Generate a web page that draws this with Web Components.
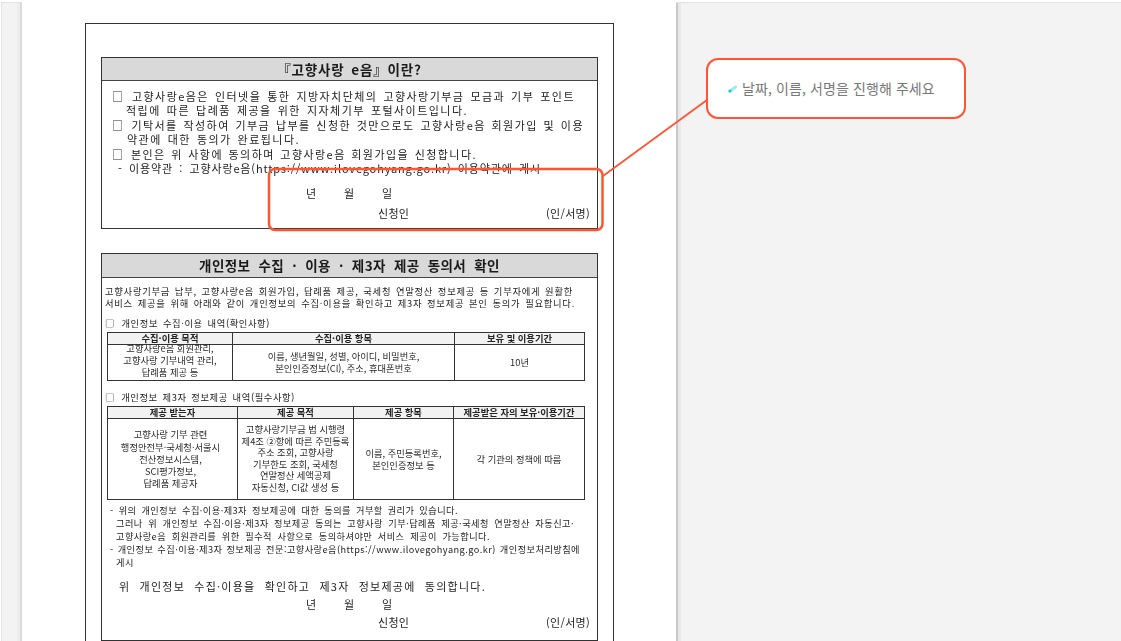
<!DOCTYPE html>
<html lang="ko">
<head>
<meta charset="utf-8">
<title>개인정보 동의서</title>
<style>
  html, body { margin: 0; height: 100%; background: #fff; overflow: hidden; }
  body { font-family: "Noto Sans CJK KR", "Noto Sans", sans-serif; }
</style>
</head>
<body>
<guide-shell>
  <consent-sheet>
    <form-box heading="『고향사랑 e음』이란?" style="--box-h:172px;--head-h:22px;--head-size:13.5px;--head-gap:2px;--head-track:.85px">
      <line-stack style="--lh:14.4px;--size:11px;--pad:8px 0 0 10px;--track:1.45px">
        <form-line style="--w:463px">□ 고향사랑e음은 인터넷을 통한 지방자치단체의 고향사랑기부금 모금과 기부 포인트</form-line>
        <form-line style="--w:342px;--in:14px">적립에 따른 답례품 제공을 위한 지자체기부 포털사이트입니다.</form-line>
        <form-line style="--w:472px">□ 기탁서를 작성하여 기부금 납부를 신청한 것만으로도 고향사랑e음 회원가입 및 이용</form-line>
        <form-line style="--w:173px;--in:15px">약관에 대한 동의가 완료됩니다.</form-line>
        <form-line style="--w:365px">□ 본인은 위 사항에 동의하며 고향사랑e음 회원가입을 신청합니다.</form-line>
        <form-line style="--w:423px;--in:6px;letter-spacing:.85px">- 이용약관 : 고향사랑e음(https://www.ilovegohyang.go.kr) 이용약관에 게시</form-line>
      </line-stack>
      <sign-block style="--top:8px;--date-h:20px;--name-h:20px"></sign-block>
    </form-box>

    <form-box heading="개인정보 수집 · 이용 · 제3자 제공 동의서 확인" style="--box-h:388px;--box-gap:24px;--head-h:23px;--head-size:13.5px;--head-gap:4px;--head-track:.38px">
      <line-stack style="--lh:12.3px;--size:9.3px;--pad:7px 0 0 3px;--track:.75px">
        <form-line style="--w:468px">고향사랑기부금 납부, 고향사랑e음 회원가입, 답례품 제공, 국세청 연말정산 정보제공 등 기부자에게 원활한</form-line>
        <form-line style="--w:470px">서비스 제공을 위해 아래와 같이 개인정보의 수집·이용을 확인하고 제3자 정보제공 본인 동의가 필요합니다.</form-line>
      </line-stack>
      <line-stack style="--lh:12px;--size:9.3px;--pad:7.4px 0 3px 3px;--track:.6px">
        <form-line style="--w:165px">□ 개인정보 수집·이용 내역(확인사항)</form-line>
      </line-stack>
      <data-grid style="--cols:124px 222px 130px;--head-h:12px;--row-h:35px">
        <grid-cell head>수집·이용 목적</grid-cell>
        <grid-cell head>수집·이용 항목</grid-cell>
        <grid-cell head>보유 및 이용기간</grid-cell>
        <grid-cell style="padding-bottom:3px;line-height:11.8px">고향사랑e음 회원관리,<br>고향사랑 기부내역 관리,<br>답례품 제공 등</grid-cell>
        <grid-cell>이름, 생년월일, 성별, 아이디, 비밀번호,<br>본인인증정보(CI), 주소, 휴대폰번호</grid-cell>
        <grid-cell>10년</grid-cell>
      </data-grid>
      <line-stack style="--lh:12px;--size:9.3px;--pad:10px 0 3px 3px;--track:.6px">
        <form-line style="--w:190px">□ 개인정보 제3자 정보제공 내역(필수사항)</form-line>
      </line-stack>
      <data-grid style="--cols:129px 116px 100px 131px;--head-h:12px;--row-h:80px">
        <grid-cell head>제공 받는자</grid-cell>
        <grid-cell head>제공 목적</grid-cell>
        <grid-cell head>제공 항목</grid-cell>
        <grid-cell head>제공받은 자의 보유·이용기간</grid-cell>
        <grid-cell style="padding-right:4px">고향사랑 기부 관련<br>행정안전부·국세청·서울시<br>전산정보시스템,<br>SCI평가정보,<br>답례품 제공자</grid-cell>
        <grid-cell style="line-height:11.5px">고향사랑기부금 법 시행령<br>제4조 ②항에 따른 주민등록<br>주소 조회, 고향사랑<br>기부한도 조회, 국세청<br>연말정산 세액공제<br>자동신청, CI값 생성 등</grid-cell>
        <grid-cell>이름, 주민등록번호,<br>본인인증정보 등</grid-cell>
        <grid-cell>각 기관의 정책에 따름</grid-cell>
      </data-grid>
      <line-stack style="--lh:13px;--size:9.2px;--pad:4px 0 0 8px;--track:.45px">
        <form-line style="--w:348px">- 위의 개인정보 수집·이용·제3자 정보제공에 대한 동의를 거부할 권리가 있습니다.</form-line>
        <form-line style="--w:458px;--in:6px">그러나 위 개인정보 수집·이용·제3자 정보제공 동의는 고향사랑 기부·답례품 제공·국세청 연말정산 자동신고·</form-line>
        <form-line style="--w:374px;--in:6px">고향사랑e음 회원관리를 위한 필수적 사항으로 동의하셔야만 서비스 제공이 가능합니다.</form-line>
        <form-line style="--w:470px">- 개인정보 수집·이용·제3자 정보제공 전문:고향사랑e음(https://www.ilovegohyang.go.kr) 개인정보처리방침에</form-line>
        <form-line style="--w:19px;--in:6px">게시</form-line>
      </line-stack>
      <line-stack style="--lh:18px;--size:11px;--pad:8px 0 0 17px;--track:1.25px">
        <form-line style="--w:367px">위 개인정보 수집·이용을 확인하고 제3자 정보제공에 동의합니다.</form-line>
      </line-stack>
      <sign-block style="--top:0px;--date-h:18px;--name-h:18px"></sign-block>
    </form-box>
  </consent-sheet>
  <guide-callout slot="side">날짜, 이름, 서명을 진행해 주세요</guide-callout>
</guide-shell>

<script>
class GuideShell extends HTMLElement {
  constructor() {
    super();
    this.attachShadow({ mode: "open" });
    this.shadowRoot.innerHTML = `
    <style>
      :host {
        display: grid;
        grid-template-columns: 1px 21px 654px 1fr;
        height: 641px;
        position: relative;
        overflow: hidden;
        background: #fff;
      }
      .rail, .side { margin-top: 2px; border-top: 1px solid #e2e2e2; }
      .rail {
        grid-column: 2;
        background: linear-gradient(90deg, #e3e3e3 0 1px, #f3f3f3 1px 16px, #ececec 16px 19px, #d9d9d9 19px);
      }
      .page { grid-column: 3; min-width: 0; }
      .side {
        grid-column: 4;
        background: linear-gradient(90deg, #c9c9c9 0 2px, #e9e9e9 2px 5px, #f3f3f3 5px);
        padding: 55px 0 0 30px;
      }
      svg { position: absolute; left: 0; top: 0; pointer-events: none; }
    </style>
    <div class="rail"></div>
    <div class="page"><slot></slot></div>
    <div class="side"><slot name="side"></slot></div>
    <svg width="1121" height="641" fill="none" stroke="#ff5533" stroke-width="2.5">
      <rect x="269" y="169" width="333.5" height="61" rx="6"/>
      <path d="M603 176 707 100" stroke-width="1.8"/>
    </svg>`;
  }
}

class ConsentSheet extends HTMLElement {
  constructor() {
    super();
    this.attachShadow({ mode: "open" });
    this.shadowRoot.innerHTML = `
    <style>
      :host {
        display: block;
        box-sizing: border-box;
        width: 529px;
        height: 660px;
        margin: 23px 0 0 63px;
        padding: 33px 15px 0;
        border: 1px solid #333;
        color: #222;
        filter: blur(.3px);
      }
    </style>
    <slot></slot>`;
  }
}

class FormBox extends HTMLElement {
  constructor() {
    super();
    this.attachShadow({ mode: "open" });
    this.shadowRoot.innerHTML = `
    <style>
      :host {
        display: block;
        box-sizing: border-box;
        height: var(--box-h);
        margin-top: var(--box-gap, 0);
        border: 1px solid #333;
      }
      h2 {
        margin: 0;
        height: var(--head-h);
        line-height: var(--head-h);
        background: #d9d9d9;
        border-bottom: 1px solid #444;
        text-align: center;
        font-size: var(--head-size);
        font-weight: 700;
        word-spacing: var(--head-gap);
        letter-spacing: var(--head-track);
        color: #1a1a1a;
      }
    </style>
    <h2></h2>
    <slot></slot>`;
  }
  connectedCallback() {
    this.shadowRoot.querySelector("h2").textContent = this.getAttribute("heading");
  }
}

class LineStack extends HTMLElement {
  constructor() {
    super();
    this.attachShadow({ mode: "open" });
    this.shadowRoot.innerHTML = `
    <style>
      :host {
        display: flex;
        flex-direction: column;
        padding: var(--pad);
        font-size: var(--size);
        line-height: var(--lh);
        letter-spacing: var(--track);
      }
    </style>
    <slot></slot>`;
  }
}

class FormLine extends HTMLElement {
  constructor() {
    super();
    this.attachShadow({ mode: "open" });
    this.shadowRoot.innerHTML = `
    <style>
      :host {
        display: block;
        width: var(--w);
        height: var(--lh);
        margin-left: var(--in, 0);
        text-align: justify;
        text-align-last: justify;
      }
    </style>
    <slot></slot>`;
  }
}

class SignBlock extends HTMLElement {
  constructor() {
    super();
    this.attachShadow({ mode: "open" });
    this.shadowRoot.innerHTML = `
    <style>
      :host {
        display: grid;
        grid-template-columns: 204px 38px 38px 1fr;
        padding-top: var(--top);
        font-size: 11px;
        letter-spacing: .3px;
      }
      div { height: var(--date-h); line-height: var(--date-h); }
      .name {
        grid-column: 1 / -1;
        height: var(--name-h);
        line-height: var(--name-h);
        display: flex;
        justify-content: space-between;
        padding: 0 7px 0 276px;
      }
      .year { grid-column: 2; }
    </style>
    <div class="year">년</div><div>월</div><div>일</div>
    <div class="name"><span>신청인</span><span>(인/서명)</span></div>`;
  }
}

class DataGrid extends HTMLElement {
  constructor() {
    super();
    this.attachShadow({ mode: "open" });
    this.shadowRoot.innerHTML = `
    <style>
      :host {
        display: grid;
        grid-template-columns: var(--cols);
        grid-template-rows: var(--head-h) var(--row-h);
        width: max-content;
        margin-left: 5px;
        border: 1px solid #333;
        font-size: 9.3px;
        line-height: 12.2px;
        color: #2a2a2a;
      }
    </style>
    <slot></slot>`;
  }
}

class GridCell extends HTMLElement {
  constructor() {
    super();
    this.attachShadow({ mode: "open" });
    this.shadowRoot.innerHTML = `
    <style>
      :host {
        display: flex;
        align-items: center;
        justify-content: center;
        box-sizing: border-box;
        text-align: center;
        white-space: nowrap;
        border-left: 1px solid #333;
      }
      :host([first]) { border-left: 0; }
      :host([head]) {
        background: #f2f2f2;
        border-bottom: 1px solid #333;
        font-weight: 700;
        color: #222;
      }
    </style>
    <div><slot></slot></div>`;
  }
  connectedCallback() {
    const cols = this.parentElement.style.getPropertyValue("--cols").trim().split(/\s+/).length;
    const index = [...this.parentElement.children].indexOf(this);
    if (index % cols === 0) this.setAttribute("first", "");
  }
}

class GuideCallout extends HTMLElement {
  constructor() {
    super();
    this.attachShadow({ mode: "open" });
    this.shadowRoot.innerHTML = `
    <style>
      :host {
        display: flex;
        align-items: center;
        gap: 5px;
        box-sizing: border-box;
        width: 260px;
        height: 61px;
        padding: 0 0 2px 20px;
        background: #fff;
        border: 2px solid #ff5533;
        border-radius: 12px;
        font-size: 14px;
        letter-spacing: .1px;
        color: #777;
        white-space: nowrap;
      }
      svg { flex: none; margin-top: 2px; }
    </style>
    <svg width="9" height="8" viewBox="0 0 9 8">
      <path d="M2 6 7.5 2" stroke="#9aecec" stroke-width="3" stroke-linecap="round"/>
      <circle cx="2" cy="6" r="1.6" fill="#27c4cf"/>
    </svg>
    <span><slot></slot></span>`;
  }
}

customElements.define("guide-shell", GuideShell);
customElements.define("consent-sheet", ConsentSheet);
customElements.define("form-box", FormBox);
customElements.define("line-stack", LineStack);
customElements.define("form-line", FormLine);
customElements.define("sign-block", SignBlock);
customElements.define("data-grid", DataGrid);
customElements.define("grid-cell", GridCell);
customElements.define("guide-callout", GuideCallout);
</script>
</body>
</html>
